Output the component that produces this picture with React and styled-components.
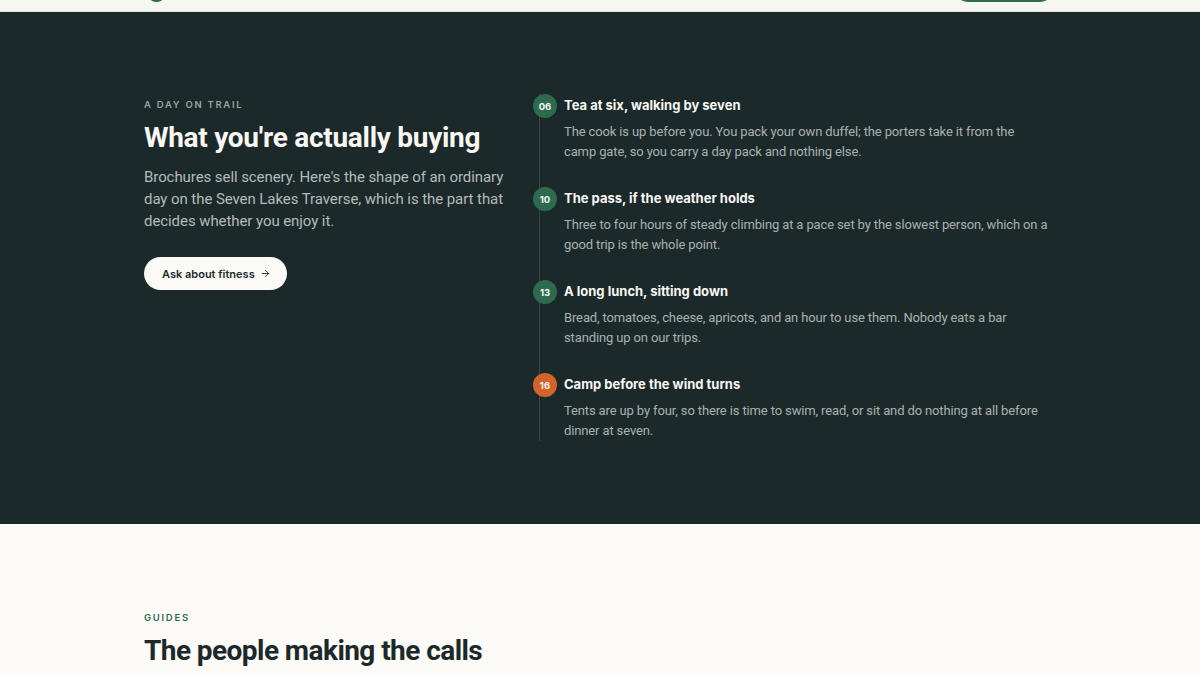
import React from "react";
import styled, { createGlobalStyle } from "styled-components";

const Global = createGlobalStyle`
  html, body { margin: 0; padding: 0; }
  body {
    background: #fbfaf6;
    font-family: Roboto, Inter, "Noto Sans", sans-serif;
    -webkit-font-smoothing: antialiased;
  }
`;

const Header = styled.header`
  box-sizing: border-box;
  height: 12px;
  overflow: hidden;
  background: #f6f7f3;
  border-bottom: 1px solid #dfe2dc;
  display: flex;
  align-items: flex-end;
  justify-content: space-between;
  padding: 0 148px 9px 148px;
`;

const LogoMark = styled.div`
  width: 17px;
  height: 28px;
  border-radius: 8px;
  background: #2f6b4f;
  flex-shrink: 0;
`;

const HeaderButton = styled.div`
  width: 104px;
  height: 34px;
  margin-right: -4px;
  border-radius: 999px;
  background: #2f6b4f;
  flex-shrink: 0;
`;

const DarkSection = styled.section`
  background: #1c292b;
  padding: 82px 0 83px;
`;

const LightSection = styled.section`
  background: #fcfbf7;
  padding: 87px 0 40px;
`;

const Container = styled.div`
  width: 912px;
  margin: 0 auto;
`;

const Split = styled.div`
  display: grid;
  grid-template-columns: 372px 1fr;
  column-gap: 17px;
  align-items: start;
`;

const Intro = styled.div`
  padding-top: 4px;
`;

const Eyebrow = styled.div`
  font-family: Inter, sans-serif;
  font-size: 9.5px;
  font-weight: 600;
  letter-spacing: 0.18em;
  text-transform: uppercase;
  color: ${(p) => (p.$light ? "#2f6b4f" : "#9ba4a1")};
  line-height: 14px;
`;

const Heading = styled.h2`
  margin: 9px 0 0;
  font-family: Roboto, Inter, sans-serif;
  font-size: 28px;
  font-weight: 700;
  letter-spacing: ${(p) => (p.$light ? "-0.02em" : "-0.01em")};
  line-height: 34px;
  color: ${(p) => (p.$light ? "#1c292b" : "#f8f7f2")};
`;

const Lead = styled.p`
  margin: 11px 0 0;
  font-size: 15px;
  line-height: 22px;
  letter-spacing: -0.005em;
  color: #b4bbb8;
`;

const PillButton = styled.button`
  margin-top: 25px;
  height: 33px;
  padding: 0 16px 0 18px;
  border: none;
  border-radius: 999px;
  background: #fbfaf6;
  color: #1c292b;
  font-family: Inter, "Noto Sans", sans-serif;
  font-size: 11px;
  font-weight: 600;
  display: inline-flex;
  align-items: center;
  gap: 5px;
  cursor: pointer;
`;

const Timeline = styled.ol`
  list-style: none;
  margin: 0;
  padding: 0;
  border-left: 1px solid #3a4748;
  margin-left: 6px;
  display: flex;
  flex-direction: column;
  gap: 25px;
`;

const Step = styled.li`
  position: relative;
  padding-left: 24px;
`;

const Dot = styled.span`
  position: absolute;
  left: -7px;
  top: 0;
  width: 24px;
  height: 24px;
  border-radius: 50%;
  background: ${(p) => (p.$accent ? "#d4622b" : "#2e6a4e")};
  color: #f6f5ef;
  font-family: Inter, sans-serif;
  font-size: 9.5px;
  font-weight: 700;
  display: flex;
  align-items: center;
  justify-content: center;
`;

const StepTitle = styled.h3`
  margin: 0;
  padding-top: 1px;
  font-family: Inter, sans-serif;
  font-size: 13px;
  font-weight: 700;
  line-height: 20px;
  color: #f8f7f2;
`;

const StepText = styled.p`
  margin: 7px 0 0;
  max-width: 484px;
  font-size: 13px;
  line-height: 20px;
  letter-spacing: -0.01em;
  color: #a9b1ae;
`;

const Arrow = () => (
  <svg width="11" height="11" viewBox="0 0 24 24" fill="none" stroke="#1c292b" strokeWidth="2" strokeLinecap="round" strokeLinejoin="round">
    <path d="M5 12h14" />
    <path d="m12 5 7 7-7 7" />
  </svg>
);

const steps = [
  {
    n: "06",
    title: "Tea at six, walking by seven",
    text: "The cook is up before you. You pack your own duffel; the porters take it from the camp gate, so you carry a day pack and nothing else.",
  },
  {
    n: "10",
    title: "The pass, if the weather holds",
    text: "Three to four hours of steady climbing at a pace set by the slowest person, which on a good trip is the whole point.",
  },
  {
    n: "13",
    title: "A long lunch, sitting down",
    text: "Bread, tomatoes, cheese, apricots, and an hour to use them. Nobody eats a bar standing up on our trips.",
  },
  {
    n: "16",
    title: "Camp before the wind turns",
    text: "Tents are up by four, so there is time to swim, read, or sit and do nothing at all before dinner at seven.",
    accent: true,
  },
];

export default function App() {
  return (
    <>
      <Global />
      <Header>
        <LogoMark />
        <HeaderButton />
      </Header>
      <DarkSection>
        <Container>
          <Split>
            <Intro>
              <Eyebrow>A day on trail</Eyebrow>
              <Heading>What you're actually buying</Heading>
              <Lead>
                Brochures sell scenery. Here's the shape of an ordinary day on the Seven Lakes Traverse, which is the part that decides whether you enjoy it.
              </Lead>
              <PillButton>
                Ask about fitness <Arrow />
              </PillButton>
            </Intro>
            <Timeline>
              {steps.map((s) => (
                <Step key={s.n}>
                  <Dot $accent={s.accent}>{s.n}</Dot>
                  <StepTitle>{s.title}</StepTitle>
                  <StepText>{s.text}</StepText>
                </Step>
              ))}
            </Timeline>
          </Split>
        </Container>
      </DarkSection>
      <LightSection>
        <Container>
          <Eyebrow $light>Guides</Eyebrow>
          <Heading $light>The people making the calls</Heading>
        </Container>
      </LightSection>
    </>
  );
}
